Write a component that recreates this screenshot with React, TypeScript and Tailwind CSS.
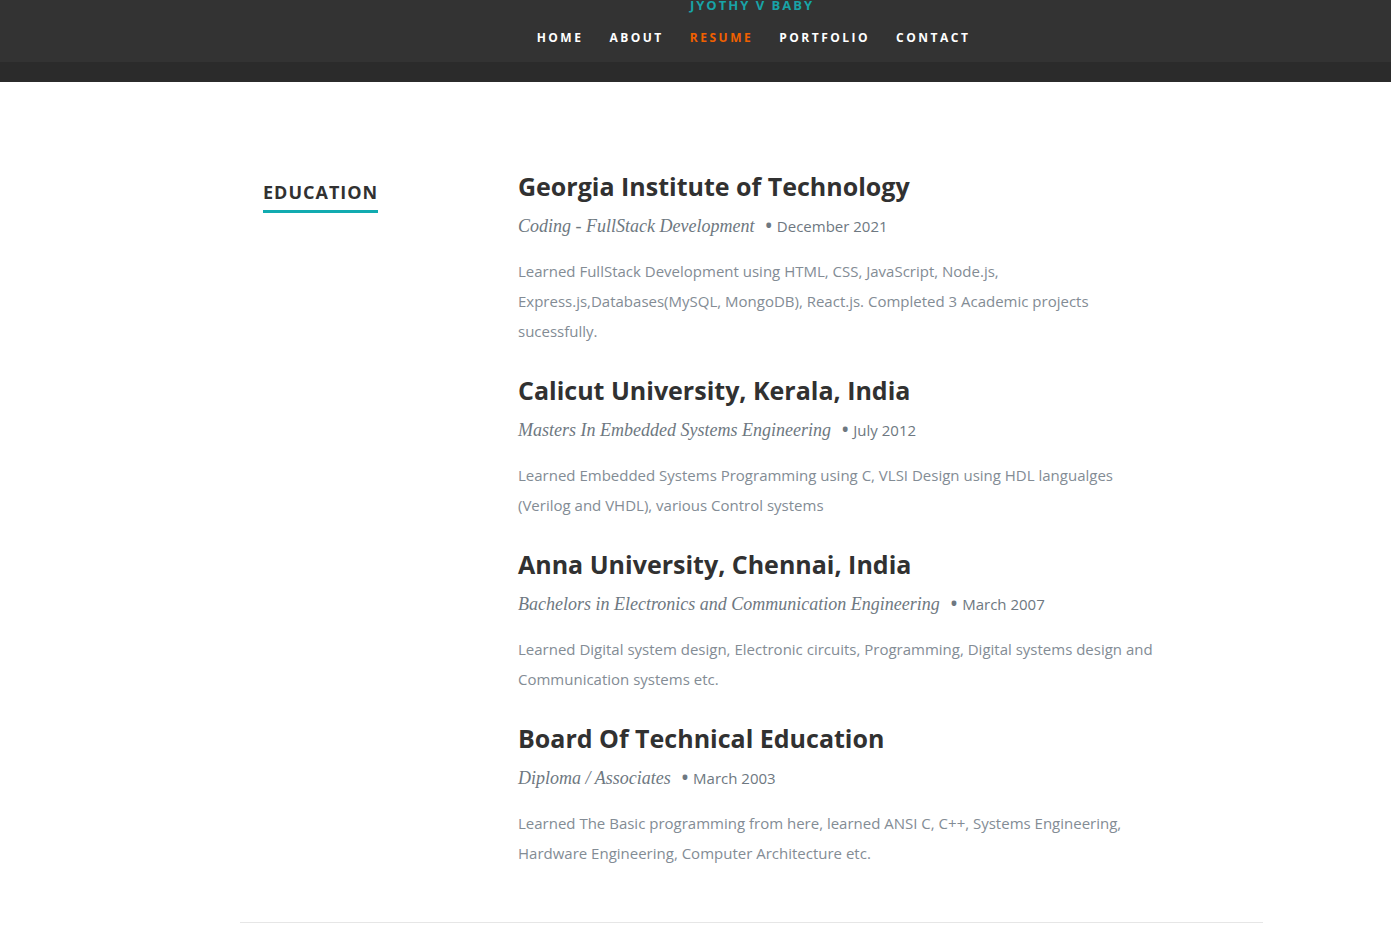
import React from "react";

const items = [
  {
    school: "Georgia Institute of Technology",
    degree: "Coding - FullStack Development",
    date: "December 2021",
    text: "Learned FullStack Development using HTML, CSS, JavaScript, Node.js, Express.js,Databases(MySQL, MongoDB), React.js. Completed 3 Academic projects sucessfully.",
  },
  {
    school: "Calicut University, Kerala, India",
    degree: "Masters In Embedded Systems Engineering",
    date: "July 2012",
    text: "Learned Embedded Systems Programming using C, VLSI Design using HDL langualges (Verilog and VHDL), various Control systems",
  },
  {
    school: "Anna University, Chennai, India",
    degree: "Bachelors in Electronics and Communication Engineering",
    date: "March 2007",
    text: "Learned Digital system design, Electronic circuits, Programming, Digital systems design and Communication systems etc.",
  },
  {
    school: "Board Of Technical Education",
    degree: "Diploma / Associates",
    date: "March 2003",
    text: "Learned The Basic programming from here, learned ANSI C, C++, Systems Engineering, Hardware Engineering, Computer Architecture etc.",
  },
];

const nav = ["HOME", "ABOUT", "RESUME", "PORTFOLIO", "CONTACT"];

export default function App() {
  return (
    <div className="min-h-[945px] bg-white font-['Open_Sans',sans-serif]">
      <header className="bg-[#2b2b2b]">
        <div className="h-[62px] bg-[#333333] flex flex-col items-center pl-[113px] overflow-hidden">
          <div className="-mt-[5px] h-[20px] text-[13px] leading-[20px] font-bold tracking-[2px] text-[#18a3a7]">
            JYOTHY V BABY
          </div>
          <nav className="mt-[10px] flex gap-[26px] pl-[3px]">
            {nav.map((n) => (
              <span
                key={n}
                className={`text-[12px] leading-[26px] font-bold tracking-[2.5px] ${
                  n === "RESUME" ? "text-[#f06000]" : "text-white"
                }`}
              >
                {n}
              </span>
            ))}
          </nav>
        </div>
        <div className="h-[20px]" />
      </header>

      <section className="ml-[240px] w-[1023px] pt-[80px] pb-[54px] border-b border-[#e6e6e6] flex">
        <div className="w-[278px] pl-[23px] pt-[18px]">
          <h1 className="inline-block text-[18px] leading-[24px] font-bold tracking-[1px] text-[#313131] border-b-[3px] border-[#11abb0] pb-[6px]">
            EDUCATION
          </h1>
        </div>
        <div className="w-[645px]">
          {items.map((it, i) => (
            <div key={i} className={i < items.length - 1 ? "mb-[20px]" : ""}>
              <h3 className="text-[25px] leading-[48px] font-bold text-[#313131]">{it.school}</h3>
              <p className="mt-[4px] mb-[18px] h-[24px] leading-[24px] flex items-baseline">
                <span className="font-['Liberation_Serif',serif] italic text-[18px] text-[#6e7881]">
                  {it.degree}
                </span>
                <span className="ml-[11px] mr-[5px] text-[17px] font-bold text-[#6e7881]">•</span>
                <span className="text-[15px] text-[#6e7881]">{it.date}</span>
              </p>
              <p className="text-[15px] leading-[30px] text-[#838c95]">{it.text}</p>
            </div>
          ))}
        </div>
      </section>
    </div>
  );
}
